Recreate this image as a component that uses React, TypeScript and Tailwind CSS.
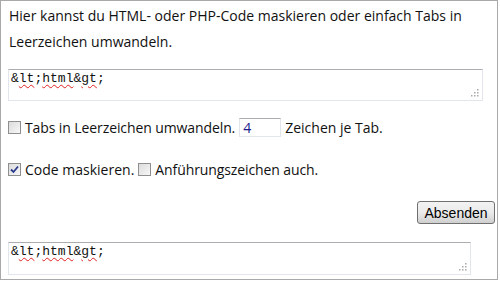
import React from "react";

const uiFont = { fontFamily: '"Open Sans", "Noto Sans", sans-serif' };

function Grip() {
  // the little dotted resize corner of a textarea
  const dots = [
    [8, 2],
    [5, 5],
    [8, 5],
    [2, 8],
    [5, 8],
    [8, 8],
  ];
  return (
    <svg width="11" height="11" className="absolute bottom-[2px] right-[2px]">
      {dots.map(([x, y], i) => (
        <rect key={i} x={x} y={y} width="1.5" height="1.5" fill="#a8a8a8" />
      ))}
    </svg>
  );
}

function Squiggle({ children }: { children: React.ReactNode }) {
  return (
    <span className="underline decoration-wavy decoration-[#e02020] decoration-1 underline-offset-[2px]">
      {children}
    </span>
  );
}

function CodeBox({ width }: { width: string }) {
  return (
    <div
      className={`relative ${width} border border-[#e2e6ec] border-t-[#abadb3] bg-white px-[2px] pt-[1px] text-[13px] leading-[15px] text-[#111]`}
      style={{ fontFamily: '"Liberation Mono", "Courier New", monospace' }}
    >
      &amp;<Squiggle>lt</Squiggle>;<Squiggle>html</Squiggle>&amp;<Squiggle>gt</Squiggle>;
      <Grip />
    </div>
  );
}

function Checkbox({ checked = false }: { checked?: boolean }) {
  return (
    <span className="relative inline-flex h-[13px] w-[13px] shrink-0 items-center justify-center border border-[#8e8f8f] bg-gradient-to-br from-[#dcdcdc] to-[#f7f7f7]">
      {checked && (
        <svg width="9" height="9" viewBox="0 0 9 9">
          <path d="M1 4.5 L3.5 7 L8 1.5" fill="none" stroke="#2a3b8c" strokeWidth="1.8" />
        </svg>
      )}
    </span>
  );
}

export default function App() {
  return (
    <div className="h-[281px] w-[500px] bg-white">
      <div
        className="flex h-[280px] w-[498px] flex-col border border-[#a9a9a9] pl-[7px] text-[14px] leading-[19px] text-[#111]"
        style={uiFont}
      >
        <p className="mt-[2px] pl-px leading-[26px]">
          Hier kannst du HTML- oder PHP-Code maskieren oder einfach Tabs in
          <br />
          Leerzeichen umwandeln.
        </p>

        <div className="mt-[14px]">
          <CodeBox width="h-[32px] w-[475px]" />
        </div>

        <div className="mt-[17px] flex items-center gap-[4px]">
          <Checkbox />
          <span className="tracking-[-0.1px]">Tabs in Leerzeichen umwandeln.</span>
          <span className="flex h-[19px] w-[42px] items-center border border-[#e2e6ec] border-t-[#abadb3] px-[3px] text-[#1a1a8a]">
            4
          </span>
          <span>Zeichen je Tab.</span>
        </div>

        <div className="mt-[23px] flex items-center gap-[4px]">
          <Checkbox checked />
          <span>Code maskieren.</span>
          <Checkbox />
          <span className="tracking-[-0.1px]">Anführungszeichen auch.</span>
        </div>

        <div className="mt-[22px] flex justify-end pr-[2px]">
          <button
            className="h-[23px] w-[78px] rounded-[3px] border border-[#707070] bg-gradient-to-b from-[#f2f2f2] via-[#ebebeb] to-[#cfcfcf] text-[14px] leading-none text-black"
            style={{ fontFamily: '"Liberation Sans", Arial, sans-serif' }}
          >
            Absenden
          </button>
        </div>

        <div className="mt-[18px]">
          <CodeBox width="h-[33px] w-[463px]" />
        </div>
      </div>
    </div>
  );
}
